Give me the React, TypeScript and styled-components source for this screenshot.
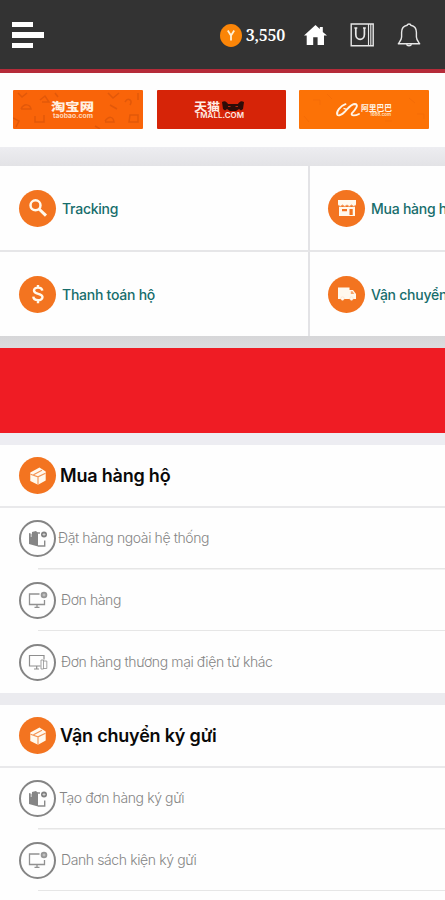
import React from 'react';
import styled, { createGlobalStyle } from 'styled-components';

const GlobalStyle = createGlobalStyle`
  * { box-sizing: border-box; }
  body { margin: 0; background: #fefefe; font-family: Inter, "Noto Sans", sans-serif; overflow: hidden; }
  svg { display: block; flex: none; }
`;

const Screen = styled.div`
  width: 445px;
  height: 900px;
  overflow: hidden;
  background: #fefefe;
`;

const Header = styled.header`
  display: flex;
  align-items: center;
  height: 73px;
  padding: 1px 24px 0 12px;
  background: #333333;
  border-bottom: 4px solid #b52b39;
`;

const MenuButton = styled.button`
  display: flex;
  flex-direction: column;
  gap: 5px;
  padding: 0;
  margin-right: auto;
  border: 0;
  background: none;
`;

const MenuBar = styled.span<{ $width: number }>`
  width: ${(p) => p.$width}px;
  height: 5.5px;
  background: #fff;
`;

const Balance = styled.div`
  display: flex;
  align-items: center;
  gap: 4px;
  margin-right: 18px;
  color: #fff;
  font: 600 16px/23px "Noto Serif", "Liberation Serif", serif;
  letter-spacing: -0.25px;
`;

const HeaderIcons = styled.nav`
  display: flex;
  align-items: center;
  gap: 23px;
`;

const Shops = styled.section`
  display: grid;
  grid-template-columns: 130px 129px 130px;
  gap: 13.5px;
  height: 74px;
  padding: 17px 0 0 13px;
`;

const Shop = styled.div<{ $color: string }>`
  height: 39px;
  overflow: hidden;
  border-radius: 1px;
  background: ${(p) => p.$color};
`;

const Band = styled.div<{ $height: number; $fill: string }>`
  height: ${(p) => p.$height}px;
  background: ${(p) => p.$fill};
`;

const ServiceGrid = styled.section`
  display: grid;
  grid-template-columns: 310px 310px;
  grid-template-rows: 86px 84px;
  width: 620px;
`;

const Service = styled.div<{ $top?: boolean; $left?: boolean }>`
  display: flex;
  align-items: center;
  gap: 6px;
  padding-left: ${(p) => (p.$left ? 19 : 18)}px;
  border-bottom: ${(p) => (p.$top ? '2px solid #e6e6e8' : '0')};
  border-right: ${(p) => (p.$left ? '2px solid #e3e3e6' : '0')};
`;

const ServiceLabel = styled.span`
  padding-top: 1px;
  color: #176d6c;
  font-size: 14px;
  font-weight: 500;
  line-height: 20px;
  letter-spacing: -0.25px;
  white-space: nowrap;
`;

const Disc = styled.span<{ $outline?: boolean }>`
  display: flex;
  flex: none;
  align-items: center;
  justify-content: center;
  width: 37px;
  height: 37px;
  border: ${(p) => (p.$outline ? '2px solid #858585' : '0')};
  border-radius: 50%;
  background: ${(p) => (p.$outline ? 'transparent' : '#f37420')};
`;

const GroupHeader = styled.div`
  display: flex;
  align-items: center;
  gap: 4px;
  height: 63px;
  padding-left: 19px;
  border-bottom: 2px solid #e9e9eb;
`;

const GroupTitle = styled.h2`
  margin: 0;
  color: #090909;
  font-size: 18px;
  font-weight: 600;
  line-height: 26px;
  letter-spacing: -0.2px;
  white-space: nowrap;
`;

const Item = styled.div<{ $gap: number; $last?: boolean }>`
  display: flex;
  align-items: center;
  gap: ${(p) => p.$gap}px;
  height: ${(p) => (p.$last ? 62 : 61.5)}px;
  padding: 0 0 0 19px;
  background: ${(p) =>
    p.$last ? 'none' : 'linear-gradient(#e6e6e6, #e6e6e6) 38px 100% / 100% 1.5px no-repeat'};
`;

const ItemLabel = styled.span`
  margin-bottom: 1px;
  color: #858585;
  font-size: 14px;
  font-weight: 300;
  line-height: 20px;
  letter-spacing: -0.39px;
  white-space: nowrap;
`;

const YuanIcon = () => (
  <svg width="22" height="23" viewBox="0 0 22 23">
    <ellipse cx="11" cy="11.5" rx="11" ry="11.4" fill="#fb8508" />
    <path d="M7.8 6.5 L11 11.5 L14.2 6.5 M11 11 V16.5" stroke="#fff0d5" strokeWidth="1.8" fill="none" />
  </svg>
);

const HomeIcon = () => (
  <svg width="24" height="22" viewBox="0 0 24 22">
    <path d="M12.5 1 L1 11.6 H3.7 V21 H10.2 V13.3 H14.6 V21 H21 V11.6 H24 L19.8 7.9 V3 H16.8 V5.1 Z" fill="#fff" />
  </svg>
);

const BagIcon = () => (
  <svg width="24" height="24" viewBox="0 0 24 24" fill="none" stroke="#e8e8e8">
    <path d="M1.2 1 H23.2 V22.8 H1.2 Z" strokeWidth="1.4" />
    <path d="M18.5 1 V23 M20.8 1 V23" strokeWidth="1.1" />
    <path d="M5.8 5 V11.5 A4.3 4.8 0 0 0 14.4 11.5 V5 M4.4 5 H7.3 M13 5 H15.8" strokeWidth="1.7" />
  </svg>
);

const BellIcon = () => (
  <svg width="24" height="24" viewBox="0 0 24 24" fill="none" stroke="#e8e8e8" strokeWidth="1.4" strokeLinejoin="round">
    <path d="M10.2 2.3 C10.2 0.5 13.8 0.5 13.8 2.3 C17.6 3.1 19.4 6 19.4 9.3 V14 C19.4 16.8 20.6 18 22.7 20.8 H1.3 C3.4 18 4.6 16.8 4.6 14 V9.3 C4.6 6 6.4 3.1 10.2 2.3 Z" />
    <path d="M9.5 21.2 C10.2 23.3 13.8 23.3 14.5 21.2" />
  </svg>
);

const ShopPattern = ({ color }: { color: string }) => (
  <g stroke={color} strokeWidth="1.5" fill="none">
    <path d="M5 3 l4 4 5-4 M8 19 c3-6 9-5 10 0 h-10 M22 26 v6 h9 v-7 M0 28 l6 3 -3 6 M27 10 l5-4 4 6 h-7" />
    <path d="M42 3 l3 4 M92 31 c4-5 8-5 9 1 h-9 M95 3 l5 5 6-5 M97 15 l7 4 M112 12 c3-5 8-2 5 3 M117 25 h8 v7 h-9 Z M125 3 v7 M82 36 l5 3" />
  </g>
);

const TaobaoLogo = () => (
  <svg width="130" height="39" viewBox="0 0 130 39">
    <ShopPattern color="#e25809" />
    <text x="38" y="21" textLength="43" lengthAdjust="spacingAndGlyphs" fontFamily="Noto Sans CJK SC, sans-serif" fontWeight="900" fontSize="11.5" fill="#fff1e2">淘宝网</text>
    <text x="40" y="28" textLength="40" lengthAdjust="spacingAndGlyphs" fontFamily="Inter, sans-serif" fontWeight="700" fontSize="6.5" fill="#ffd9bc">taobao.com</text>
  </svg>
);

const TmallLogo = () => (
  <svg width="129" height="39" viewBox="0 0 129 39">
    <text x="37" y="20.5" textLength="26" lengthAdjust="spacingAndGlyphs" fontFamily="Noto Sans CJK SC, sans-serif" fontWeight="700" fontSize="11.5" fill="#ffede6">天猫</text>
    <path d="M65 12 C68 10 70 12 71 14 H81 C82 12 84 10 87 12 L86 19 L84 20.5 L82 19 L79 21 H73 L70 19 L68 20.5 L66 19 Z" fill="#2e0c08" />
    <path d="M71 16.5 h2.5 M78.5 16.5 h2.5" stroke="#b72710" strokeWidth="1.2" />
    <text x="38" y="28" textLength="49" lengthAdjust="spacingAndGlyphs" fontFamily="Inter, sans-serif" fontWeight="600" fontSize="7.5" fill="#ffece4">TMALL.COM</text>
  </svg>
);

const AlibabaLogo = () => (
  <svg width="130" height="39" viewBox="0 0 130 39">
    <g stroke="#f56c06" fill="none">
      <path d="M5 26 l5 6 M14 10 h7 v5 M28 4 l5 5 M86 31 h7 M110 8 l6 5 M118 24 h7 v5" />
    </g>
    <path d="M46.5 14.2 C41 16 37 22 38.3 24.7 C39.6 26.5 43 24.5 45.5 22 C49 18.5 52 14 56 14 C60.5 14.5 56 20 52.8 23.3 C51.8 26 56 26 60 24" fill="none" stroke="#fff4e7" strokeWidth="1.9" strokeLinecap="round" />
    <path d="M44.5 18.3 l3.2 1" stroke="#fff4e7" strokeWidth="1.3" />
    <text x="62" y="21" textLength="31" lengthAdjust="spacingAndGlyphs" fontFamily="Noto Sans CJK SC, sans-serif" fontWeight="700" fontSize="8" fill="#fff4e7">阿里巴巴</text>
    <text x="71" y="26" textLength="21" lengthAdjust="spacingAndGlyphs" fontFamily="Inter, sans-serif" fontWeight="600" fontSize="4.5" fill="#ffe5c8">1688.com</text>
  </svg>
);

const SearchIcon = () => (
  <svg width="20" height="20" viewBox="0 0 20 20" fill="none" stroke="#fff9ed">
    <circle cx="7.5" cy="7.3" r="5" strokeWidth="2.5" />
    <path d="M11 11 L18 17.6" strokeWidth="3" />
  </svg>
);

const DollarIcon = () => (
  <svg width="14" height="20" viewBox="0 0 14 20" fill="none" stroke="#fff9ed" strokeWidth="2.4">
    <path d="M11.3 6.7 C11 2.6 3 2.6 3 6.5 C3 11 11.5 8.7 11.5 13.1 C11.5 17.3 2.7 17.2 2.3 12.6 M7 1 V4 M7 16 V19.2" />
  </svg>
);

const StoreIcon = () => (
  <svg width="20" height="20" viewBox="0 0 20 20">
    <path d="M1 2 H19 V7 H1 Z M2 9 H18 V18 H2 Z" fill="#fff9ed" />
    <path d="M1 7 Q3.2 10 5.5 7 Q7.7 10 10 7 Q12.3 10 14.5 7 Q16.8 10 19 7" fill="#fff9ed" stroke="#f39350" strokeWidth="0.9" />
    <path d="M5 11 h5 v2.3 h-5 Z M12.5 11 h3.2 v6 h-3.2 Z" fill="#f37420" />
  </svg>
);

const TruckIcon = () => (
  <svg width="20" height="16" viewBox="0 0 20 16">
    <path d="M1 1.5 H12.5 V4 H16 L19 8 V13 H1 Z" fill="#fff9ed" />
    <path d="M13.8 5.3 H15.5 L17.3 8 H13.8 Z" fill="#f6a66e" />
    <circle cx="5.5" cy="12.6" r="1.8" fill="#fff9ed" stroke="#fbd0b0" strokeWidth=".4" />
    <circle cx="14.5" cy="12.6" r="1.8" fill="#fff9ed" stroke="#fbd0b0" strokeWidth=".4" />
  </svg>
);

const BoxIcon = () => (
  <svg width="18" height="20" viewBox="0 0 18 20">
    <path d="M1.3 6.5 L10.5 1.5 L16.7 5.5 V14.5 L9 18.8 L1.3 15 Z" fill="#fff9ed" />
    <path d="M1.5 8.2 L9 10.8 L16.5 7.2 M9 10.8 V18.8 M4.5 8.8 L13 4.2" fill="none" stroke="#f49351" strokeWidth="1.1" />
  </svg>
);

const ParcelIcon = () => (
  <svg width="20" height="18" viewBox="0 0 20 18">
    <path d="M1 3 L4 4 V2 L8 1 L10 3 V16.5 L1 14 Z" fill="#858585" />
    <path d="M3.2 3.5 V7" stroke="#fff" strokeWidth=".7" />
    <path d="M10 16 H16.7 V10.5 M9 3 H12" fill="none" stroke="#8a8a8a" strokeWidth="1.4" />
    <circle cx="16" cy="4.5" r="3" fill="#808080" />
    <path d="M14.5 4.5 H17.5 M16 3 V6" stroke="#ddd" strokeWidth=".8" />
  </svg>
);

const MonitorIcon = () => (
  <svg width="20" height="18" viewBox="0 0 20 18" fill="none" stroke="#919191" strokeWidth="1.3">
    <path d="M11.5 3 H1.5 V13.5 H16.5 V9 M9 13.5 V16 M6.5 16.3 H11.5" />
    <circle cx="16" cy="4" r="3.3" fill="#969696" stroke="none" />
    <path d="M16 2.5 V5.5 M14.5 4 H17.5" stroke="#ddd" strokeWidth=".7" />
  </svg>
);

const DevicesIcon = () => (
  <svg width="20" height="18" viewBox="0 0 20 18" fill="none" stroke="#8e8e8e" strokeWidth="1.2">
    <path d="M12.5 13 H1.5 V2.5 H16 V6.5 M8.7 13 V15.5 M6 16 H11" />
    <path d="M13 7 H15.5 V16 H13 Z M15.5 8 H18.8 V15.5 H15.5" strokeWidth=".8" />
  </svg>
);

interface Entry {
  label: string;
  icon: React.ReactNode;
  gap: number;
}

const purchaseItems: Entry[] = [
  { label: 'Đặt hàng ngoài hệ thống', icon: <ParcelIcon />, gap: 2 },
  { label: 'Đơn hàng', icon: <MonitorIcon />, gap: 5 },
  { label: 'Đơn hàng thương mại điện tử khác', icon: <DevicesIcon />, gap: 5 },
];

const consignmentItems: Entry[] = [
  { label: 'Tạo đơn hàng ký gửi', icon: <ParcelIcon />, gap: 3 },
  { label: 'Danh sách kiện ký gửi', icon: <MonitorIcon />, gap: 5 },
];

const Group = ({ title, items, closed }: { title: string; items: Entry[]; closed?: boolean }) => (
  <section>
    <GroupHeader>
      <Disc><BoxIcon /></Disc>
      <GroupTitle>{title}</GroupTitle>
    </GroupHeader>
    {items.map((item, i) => (
      <Item key={item.label} $gap={item.gap} $last={closed && i === items.length - 1}>
        <Disc $outline>{item.icon}</Disc>
        <ItemLabel>{item.label}</ItemLabel>
      </Item>
    ))}
  </section>
);

export default function App() {
  return (
    <>
      <GlobalStyle />
      <Screen>
        <Header>
          <MenuButton aria-label="Menu">
            <MenuBar $width={21} />
            <MenuBar $width={32} />
            <MenuBar $width={21} />
          </MenuButton>
          <Balance><YuanIcon />3,550</Balance>
          <HeaderIcons><HomeIcon /><BagIcon /><BellIcon /></HeaderIcons>
        </Header>
        <Shops>
          <Shop $color="#f96409"><TaobaoLogo /></Shop>
          <Shop $color="#d62408"><TmallLogo /></Shop>
          <Shop $color="#fc7206"><AlibabaLogo /></Shop>
        </Shops>
        <Band $height={19} $fill="linear-gradient(#ededf1, #e3e3e6)" />
        <ServiceGrid>
          <Service $top $left><Disc><SearchIcon /></Disc><ServiceLabel>Tracking</ServiceLabel></Service>
          <Service $top><Disc><StoreIcon /></Disc><ServiceLabel>Mua hàng hộ</ServiceLabel></Service>
          <Service $left><Disc><DollarIcon /></Disc><ServiceLabel>Thanh toán hộ</ServiceLabel></Service>
          <Service><Disc><TruckIcon /></Disc><ServiceLabel>Vận chuyển</ServiceLabel></Service>
        </ServiceGrid>
        <Band $height={12} $fill="linear-gradient(#d6d6d8, #dcdcde)" />
        <Band $height={85} $fill="#ef1c24" />
        <Band $height={12} $fill="#ededf2" />
        <Group title="Mua hàng hộ" items={purchaseItems} closed />
        <Band $height={12} $fill="#ebebef" />
        <Group title="Vận chuyển ký gửi" items={consignmentItems} />
      </Screen>
    </>
  );
}
